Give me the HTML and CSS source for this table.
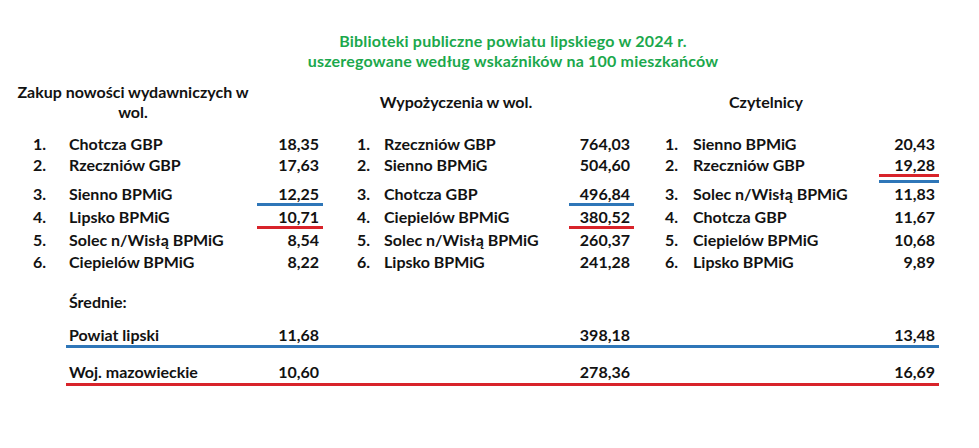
FILE: index.html
```html
<!DOCTYPE html>
<html lang="pl">
<head>
<meta charset="utf-8">
<title>Biblioteki publiczne powiatu lipskiego w 2024 r.</title>
<link rel="stylesheet" href="styles.css">
</head>
<body>
<main class="page">
  <h1 class="title">Biblioteki publiczne powiatu lipskiego w 2024 r.<br>uszeregowane według wskaźników na 100 mieszkańców</h1>

  <div class="heads">
    <div class="head head-1">Zakup nowości wydawniczych w wol.</div>
    <div class="head head-2">Wypożyczenia w wol.</div>
    <div class="head head-3">Czytelnicy</div>
  </div>

  <div class="ranks">
    <div class="num">1.</div><div class="name">Chotcza GBP</div><div class="val">18,35</div>
    <div class="num g2">1.</div><div class="name">Rzeczniów GBP</div><div class="val">764,03</div>
    <div class="num g3">1.</div><div class="name">Sienno BPMiG</div><div class="val">20,43</div>

    <div class="num">2.</div><div class="name">Rzeczniów GBP</div><div class="val">17,63</div>
    <div class="num g2">2.</div><div class="name">Sienno BPMiG</div><div class="val">504,60</div>
    <div class="num g3">2.</div><div class="name">Rzeczniów GBP</div><div class="val both">19,28</div>

    <div class="num">3.</div><div class="name">Sienno BPMiG</div><div class="val blue">12,25</div>
    <div class="num g2">3.</div><div class="name">Chotcza GBP</div><div class="val blue">496,84</div>
    <div class="num g3">3.</div><div class="name">Solec n/Wisłą BPMiG</div><div class="val">11,83</div>

    <div class="num">4.</div><div class="name">Lipsko BPMiG</div><div class="val red">10,71</div>
    <div class="num g2">4.</div><div class="name">Ciepielów BPMiG</div><div class="val red">380,52</div>
    <div class="num g3">4.</div><div class="name">Chotcza GBP</div><div class="val">11,67</div>

    <div class="num">5.</div><div class="name">Solec n/Wisłą BPMiG</div><div class="val">8,54</div>
    <div class="num g2">5.</div><div class="name">Solec n/Wisłą BPMiG</div><div class="val">260,37</div>
    <div class="num g3">5.</div><div class="name">Ciepielów BPMiG</div><div class="val">10,68</div>

    <div class="num">6.</div><div class="name">Ciepielów BPMiG</div><div class="val">8,22</div>
    <div class="num g2">6.</div><div class="name">Lipsko BPMiG</div><div class="val">241,28</div>
    <div class="num g3">6.</div><div class="name">Lipsko BPMiG</div><div class="val">9,89</div>
  </div>

  <section class="avgs">
    <div class="avg-title">Średnie:</div>
    <div class="avg-row pow">
      <div class="avg-label">Powiat lipski</div>
      <div class="avg-val v1">11,68</div>
      <div class="avg-val v2">398,18</div>
      <div class="avg-val v3">13,48</div>
    </div>
    <div class="avg-row woj">
      <div class="avg-label">Woj. mazowieckie</div>
      <div class="avg-val v1">10,60</div>
      <div class="avg-val v2">278,36</div>
      <div class="avg-val v3">16,69</div>
    </div>
  </section>
</main>
</body>
</html>
```

FILE: styles.css
```css
html, body {
  margin: 0;
  padding: 0;
  background: #ffffff;
}

body {
  font-family: Lato, "Open Sans", "Liberation Sans", sans-serif;
  font-weight: 700;
  color: #121212;
}

.page {
  width: 979px;
  height: 448px;
  box-sizing: border-box;
  padding-top: 31px;
  overflow: hidden;
}

.title {
  margin: 0;
  padding-left: 47px;
  text-align: center;
  font-size: 16px;
  letter-spacing: 0.2px;
  line-height: 20px;
  font-weight: 700;
  color: #1ba84c;
}

.heads {
  display: flex;
  align-items: center;
  height: 40px;
  margin-top: 11px;
  padding-left: 12px;
}

.head {
  text-align: center;
  font-size: 16px;
  line-height: 20px;
}

.head-1 { width: 242px; }
.head-2 { width: 404px; }
.head-3 { width: 216px; }

.ranks {
  display: grid;
  margin: 11px 0 0 33px;
  grid-template-columns: 36px 188px 66px 61px 185px 65px 59px 186px 60px;
  grid-template-rows: 21px 29px 23px 23px 22px 22px;
  font-size: 16px;
  line-height: 21px;
}

.num.g2 { padding-left: 34px; }
.num.g3 { padding-left: 31px; }

.name { white-space: nowrap; }

.val {
  text-align: right;
  padding-right: 4px;
}

.blue {
  background: linear-gradient(#2e76b8, #2e76b8) left 0 bottom 0 / 100% 3px no-repeat;
}

.red {
  background: linear-gradient(#d8232a, #d8232a) left 0 bottom 0 / 100% 3px no-repeat;
}

.both {
  background:
    linear-gradient(#d8232a, #d8232a) left 0 bottom 6px / 100% 3px no-repeat,
    linear-gradient(#2e76b8, #2e76b8) left 0 bottom 0 / 100% 3px no-repeat;
}

.avgs {
  margin: 18px 0 0 66px;
  width: 873px;
  font-size: 16px;
  line-height: 21px;
}

.avg-title {
  padding-left: 3px;
}

.avg-row {
  display: grid;
  grid-template-columns: 191px 66px 246px 65px 245px 60px;
  box-sizing: border-box;
}

.avg-row.pow {
  margin-top: 12px;
  height: 24px;
  border-bottom: 3px solid #2e76b8;
}

.avg-row.woj {
  margin-top: 13px;
  height: 25px;
  border-bottom: 3px solid #d8232a;
}

.avg-label {
  padding-left: 3px;
  white-space: nowrap;
}

.avg-val {
  text-align: right;
  padding-right: 4px;
}

.v1 { grid-column: 2; }
.v2 { grid-column: 4; }
.v3 { grid-column: 6; }
```
